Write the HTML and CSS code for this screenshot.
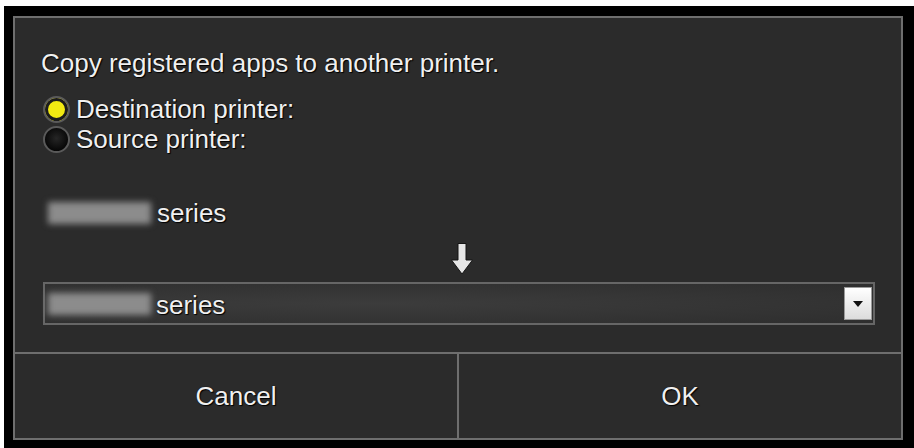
FILE: index.html
```html
<!DOCTYPE html>
<html>
<head>
<meta charset="utf-8">
<link rel="stylesheet" href="styles.css">
</head>
<body>
<div class="frame">
  <div class="dialog">
    <div class="content">
      <p class="title">Copy registered apps to another printer.</p>
      <div class="radios">
        <label class="radio"><span class="dot on"></span><span>Destination printer:</span></label>
        <label class="radio"><span class="dot"></span><span>Source printer:</span></label>
      </div>
      <div class="source"><span class="blur"></span><span>series</span></div>
      <div class="arrow-row">
        <svg class="arrow" width="22" height="32" viewBox="0 0 22 32"><path d="M7 0.5 H15 V17 H21.5 L11 31 L0.5 17 H7 Z" fill="#e6e6e6" stroke="#151515" stroke-width="1"/></svg>
      </div>
      <div class="select">
        <span class="blur small"></span><span class="sel-text">series</span>
        <span class="drop"><svg width="12" height="8" viewBox="0 0 12 8"><path d="M1 1 H11 L6 7 Z" fill="#111"/></svg></span>
      </div>
    </div>
    <div class="buttons">
      <div class="btn">Cancel</div>
      <div class="btn">OK</div>
    </div>
  </div>
</div>
</body>
</html>
```
FILE: styles.css
```css
html, body {
  margin: 0;
  padding: 0;
  background: #fff;
}
body {
  font-family: "Liberation Sans", Arial, sans-serif;
}
.frame {
  margin: 6px 0 0 4px;
  width: 910px;
  height: 442px;
  background: #000;
  padding: 10px 0 0 9px;
  box-sizing: border-box;
}
.dialog {
  width: 890px;
  height: 424px;
  box-sizing: border-box;
  border: 2px solid #6e6e6e;
  background: #2b2b2b;
  display: flex;
  flex-direction: column;
  color: #f0f0f0;
  font-size: 26px;
  line-height: 30px;
  text-shadow: 0 0 1px #000, 1px 1px 1px #000;
}
.content {
  height: 336px;
  flex: none;
  box-sizing: border-box;
  padding: 30px 0 0 26px;
  border-bottom: 2px solid #6e6e6e;
}
.title {
  margin: 0;
}
.radios {
  margin-top: 16px;
  display: flex;
  flex-direction: column;
}
.radio {
  display: flex;
  align-items: center;
  height: 30px;
}
.dot {
  width: 23px;
  height: 23px;
  border-radius: 50%;
  border: 2px solid #5a5a5a;
  background: radial-gradient(circle at 50% 45%, #262626 0%, #050505 75%);
  margin: 0 6px 0 2px;
}
.dot.on {
  background: #f2ea12;
  box-shadow: inset 0 0 0 3px #1c1c1c;
}
.source {
  margin-top: 44px;
  display: flex;
  align-items: center;
  height: 30px;
}
.blur {
  display: inline-block;
  width: 103px;
  height: 22px;
  background: #8c8c8c;
  filter: blur(3px);
  margin: 0 6px 0 7px;
}
.blur.small {
  margin: 0 5px 0 3px;
}
.arrow-row {
  display: flex;
  justify-content: center;
  margin-top: 15px;
}
.arrow {
  display: block;
  margin-right: 18px;
}
.select {
  margin-top: 7px;
  margin-left: 2px;
  width: 832px;
  height: 43px;
  box-sizing: border-box;
  border: 2px solid #666;
  background: radial-gradient(ellipse at 40% 50%, #3c3c3c 0%, #2e2e2e 100%);
  display: flex;
  align-items: center;
}
.sel-text {
  flex: 1;
  padding-top: 2px;
}
.drop {
  width: 28px;
  height: 33px;
  margin-right: 1px;
  background: linear-gradient(#ffffff, #dcdcdc);
  border: 1px solid #9a9a9a;
  display: flex;
  align-items: center;
  justify-content: center;
  box-sizing: border-box;
}
.buttons {
  flex: 1;
  display: flex;
}
.btn {
  flex: 1;
  display: flex;
  align-items: center;
  justify-content: center;
}
.btn + .btn {
  border-left: 2px solid #6e6e6e;
}
```
